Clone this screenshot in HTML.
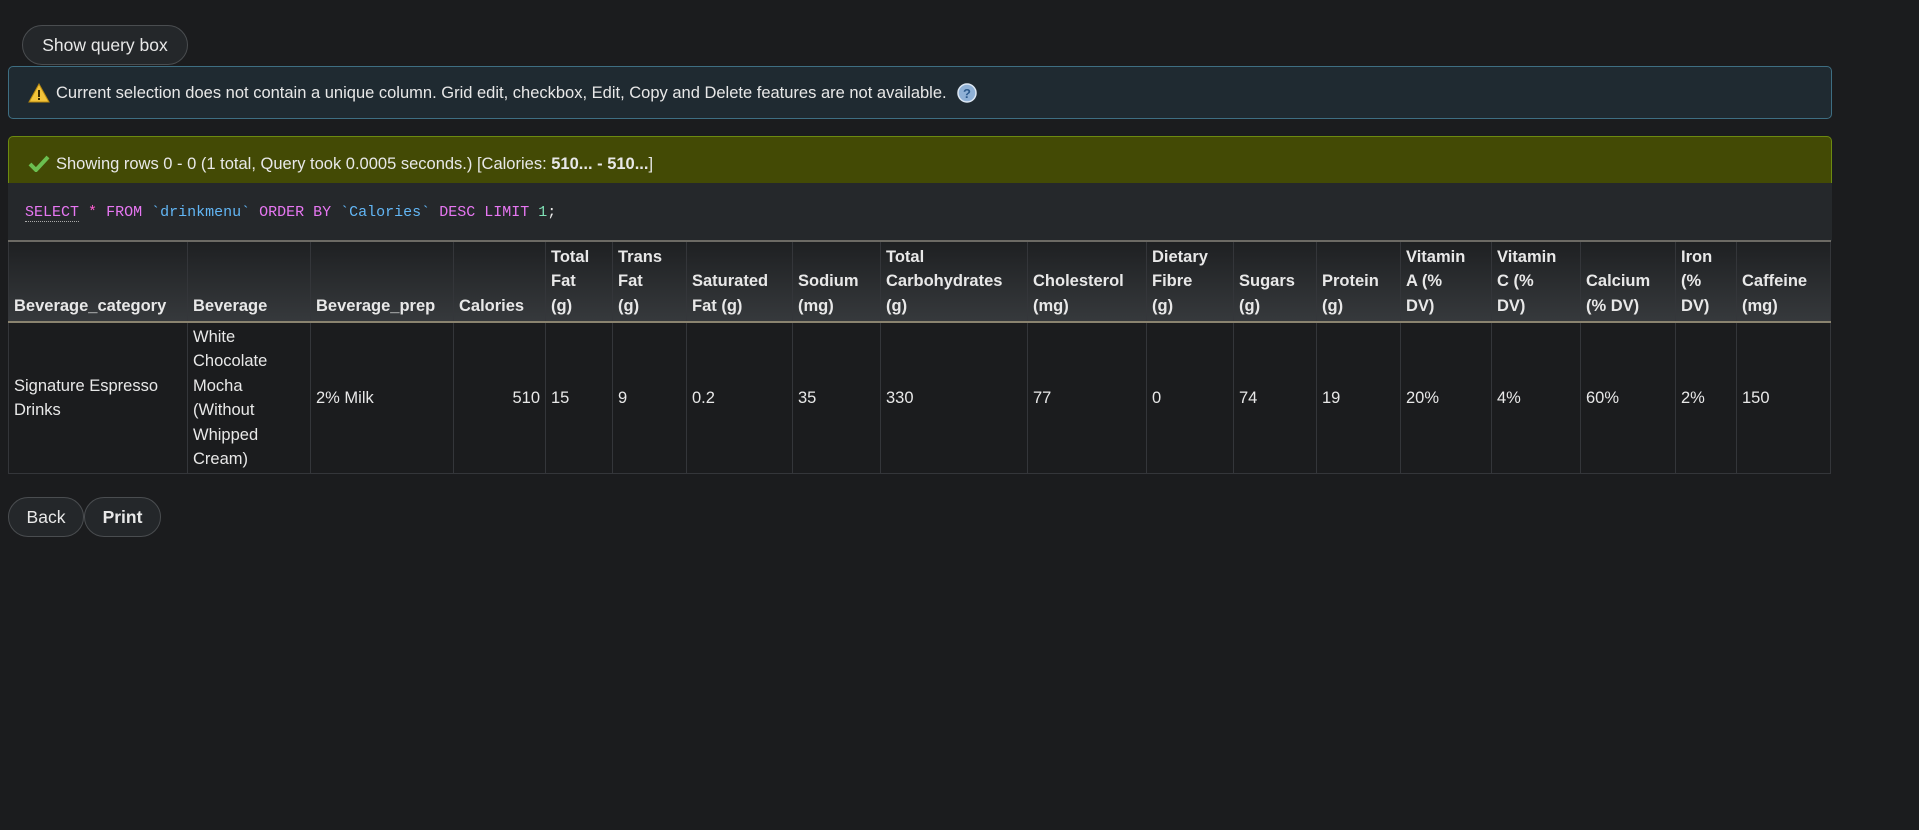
<!DOCTYPE html>
<html><head><meta charset="utf-8"><style>
body{margin:0;width:1919px;height:830px;background:#1b1c1e;font-family:"Liberation Sans",Arial,sans-serif;color:#e8e8e8;font-size:16.5px;position:relative;overflow:hidden}
.btn{position:absolute;background:#24272a;border:1px solid #4a4d50;border-radius:20px;color:#e8e8e8;font-size:17.5px;box-sizing:border-box;display:flex;align-items:center;justify-content:center}
.notice{position:absolute;left:8px;top:66px;width:1824px;height:53px;box-sizing:border-box;background:#1f2a31;border:1px solid #3e6e82;border-radius:5px}
.ok{position:absolute;left:8px;top:136px;width:1824px;height:48px;box-sizing:border-box;background:#434a05;border:1px solid #6c8a10;border-bottom:none;border-radius:5px 5px 0 0}
.sql{position:absolute;left:8px;top:183px;width:1824px;height:58px;background:#25282b}
.mono{font-family:"Liberation Mono","DejaVu Sans Mono",monospace;font-size:15px}
table{position:absolute;left:8px;top:240px;border-collapse:collapse;table-layout:fixed}
th,td{border:1.5px solid #34363a;padding:0 5px;vertical-align:bottom;text-align:left;line-height:24.5px}
th{background:linear-gradient(#1e2022,#36393c);font-weight:bold;height:76px;border-bottom:2px solid #8a836f;border-top:2px solid #6c6a64;padding-bottom:3px;white-space:nowrap;overflow:hidden}
td{background:#1b1c1e;vertical-align:middle;height:150px;padding-top:0;padding-bottom:0}
</style></head><body>
<div class="btn" style="left:22px;top:25px;width:166px;height:40px">Show query box</div>
<div class="notice">
<svg style="position:absolute;left:19px;top:16px" width="22" height="20" viewBox="0 0 22 20"><path d="M11 1L21 19H1Z" fill="#f3c43a" stroke="#b88a10" stroke-width="1"/><rect x="10" y="7" width="2" height="7" fill="#3a2a00"/><rect x="10" y="15" width="2" height="2" fill="#3a2a00"/></svg>
<span style="position:absolute;left:47px;top:17px">Current selection does not contain a unique column. Grid edit, checkbox, Edit, Copy and Delete features are not available.</span>
<svg style="position:absolute;left:948px;top:16px" width="20" height="20"><circle cx="10" cy="10" r="9" fill="#8fb1d6" stroke="#dce7f3" stroke-width="1.5"/><text x="10" y="15" font-size="13" font-weight="bold" text-anchor="middle" fill="#2c5a8c" font-family="Liberation Sans">?</text></svg>
</div>
<div class="ok">
<svg style="position:absolute;left:19px;top:17px" width="22" height="18" viewBox="0 0 22 18"><path d="M2 10L8 16L20 3" fill="none" stroke="#6bbf50" stroke-width="4"/></svg>
<span style="position:absolute;left:47px;top:18px">Showing rows 0 - 0 (1 total, Query took 0.0005 seconds.) [Calories: <b>510... - 510...</b>]</span>
</div>
<div class="sql"><span class="mono" style="position:absolute;left:17px;top:21px;white-space:pre"><span style="color:#e777f2;border-bottom:1px dotted #aaa">SELECT</span> <span style="color:#ff5ed3">*</span> <span style="color:#e777f2">FROM</span> <span style="color:#62b6f5">`drinkmenu`</span> <span style="color:#e777f2">ORDER BY</span> <span style="color:#62b6f5">`Calories`</span> <span style="color:#e777f2">DESC LIMIT</span> <span style="color:#7fe0b5">1</span>;</span></div>
<table>
<colgroup><col style="width:179px"><col style="width:123px"><col style="width:143px"><col style="width:92px"><col style="width:67px"><col style="width:74px"><col style="width:106px"><col style="width:88px"><col style="width:147px"><col style="width:119px"><col style="width:87px"><col style="width:83px"><col style="width:84px"><col style="width:91px"><col style="width:89px"><col style="width:95px"><col style="width:61px"><col style="width:94px"></colgroup>
<tr><th>Beverage_category</th><th>Beverage</th><th>Beverage_prep</th><th>Calories</th><th>Total<br>Fat<br>(g)</th><th>Trans<br>Fat<br>(g)</th><th>Saturated<br>Fat (g)</th><th>Sodium<br>(mg)</th><th>Total<br>Carbohydrates<br>(g)</th><th>Cholesterol<br>(mg)</th><th>Dietary<br>Fibre<br>(g)</th><th>Sugars<br>(g)</th><th>Protein<br>(g)</th><th>Vitamin<br>A (%<br>DV)</th><th>Vitamin<br>C (%<br>DV)</th><th>Calcium<br>(% DV)</th><th>Iron<br>(%<br>DV)</th><th>Caffeine<br>(mg)</th></tr>
<tr><td>Signature Espresso Drinks</td><td>White Chocolate Mocha (Without Whipped Cream)</td><td>2% Milk</td><td style="text-align:right">510</td><td>15</td><td>9</td><td>0.2</td><td>35</td><td>330</td><td>77</td><td>0</td><td>74</td><td>19</td><td>20%</td><td>4%</td><td>60%</td><td>2%</td><td>150</td></tr>
</table>
<div class="btn" style="left:8px;top:497px;width:76px;height:40px">Back</div>
<div class="btn" style="left:84px;top:497px;width:77px;height:40px;font-weight:bold">Print</div>
</body></html>
